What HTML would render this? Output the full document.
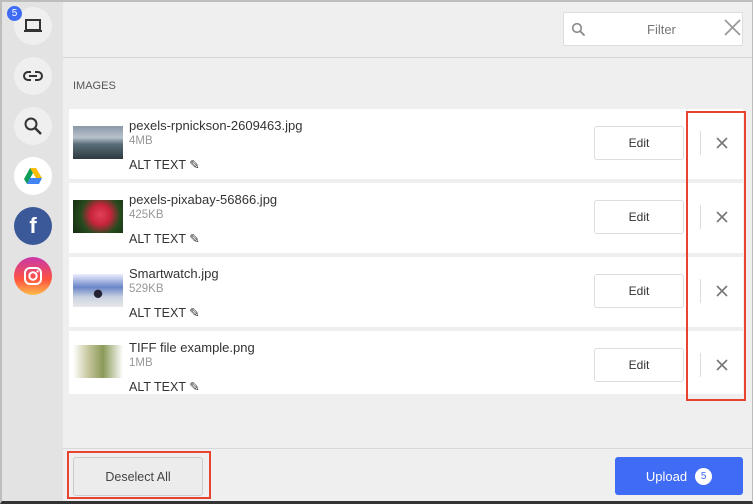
<!DOCTYPE html><html><head><style>
*{box-sizing:border-box;margin:0;padding:0}
body{width:753px;height:504px;overflow:hidden;font-family:"Liberation Sans",sans-serif;background:#efefef;position:relative}
.frame{position:absolute;left:0;top:0;width:753px;height:504px;border-top:2px solid #bdbdbd;border-left:2px solid #bdbdbd;border-bottom:3px solid #333;border-right:1px solid #bdbdbd}
.side{position:absolute;left:2px;top:2px;width:61px;height:499px;background:#e3e3e3}
.ic{position:absolute;left:14px;width:38px;height:38px;border-radius:50%;background:#efefef;display:flex;align-items:center;justify-content:center}
.hline{position:absolute;left:63px;right:1px;height:1px;background:#d8d8d8}
.row{position:absolute;left:69px;width:674px;height:70px;background:#fff}
.th{position:absolute;left:4px;top:17px;width:50px;height:33px}
.nm{position:absolute;left:60px;top:9px;font-size:13px;color:#333}
.sz{position:absolute;left:60px;top:26px;font-size:11.5px;color:#999}
.alt{position:absolute;left:60px;top:48px;font-size:12.5px;color:#333}
.edit{position:absolute;left:525px;top:17px;width:90px;height:34px;border:1px solid #ddd;border-radius:3px;font-size:12px;color:#333;display:flex;align-items:center;justify-content:center}
.dv{position:absolute;left:631px;top:22px;width:1px;height:24px;background:#ddd}
.x{position:absolute;left:646px;top:27px}
.red{position:absolute;border:2px solid #e8432f}
</style></head><body>
<div class="side"></div>
<div class="ic" style="top:7px"><svg width="20" height="18" viewBox="0 0 20 18"><rect x="3" y="3" width="14" height="10" fill="none" stroke="#333" stroke-width="2"/><rect x="1" y="13" width="18" height="2" fill="#333"/></svg></div>
<div style="position:absolute;left:7px;top:6px;width:15px;height:15px;border-radius:50%;background:#3f6bf5;color:#fff;font-size:10px;text-align:center;line-height:15px">5</div>
<div class="ic" style="top:57px"><svg width="20" height="12" viewBox="0 0 20 12"><path d="M8 2H5a4 4 0 0 0 0 8h3M12 2h3a4 4 0 0 1 0 8h-3M6 6h8" fill="none" stroke="#333" stroke-width="2"/></svg></div>
<div class="ic" style="top:107px"><svg width="20" height="20" viewBox="0 0 20 20"><circle cx="8" cy="8" r="5.5" fill="none" stroke="#333" stroke-width="2"/><path d="M12 12l6 6" stroke="#333" stroke-width="2.4"/></svg></div>
<div class="ic" style="top:157px;background:#fff"><svg width="20" height="18" viewBox="0 0 20 18"><path d="M7 1h6l6 10h-6z" fill="#fbbc04"/><path d="M7 1l3 5-6 11-3-5z" fill="#0f9d58"/><path d="M4 17l3-6h12l-3 6z" fill="#4285f4"/></svg></div>
<div class="ic" style="top:207px;background:#3b5998;color:#fff;font-weight:bold;font-size:22px">f</div>
<div class="ic" style="top:257px;background:linear-gradient(#c837ab,#ff543e 60%,#fdbc4b)"><svg width="20" height="20" viewBox="0 0 20 20"><rect x="2" y="2" width="16" height="16" rx="5" fill="none" stroke="#fff" stroke-width="2"/><circle cx="10" cy="10" r="3.7" fill="none" stroke="#fff" stroke-width="2"/><circle cx="14.6" cy="5.4" r="1.1" fill="#fff"/></svg></div>
<div class="hline" style="top:57px"></div>
<div style="position:absolute;left:563px;top:12px;width:180px;height:34px;background:#fff;border:1px solid #ddd;border-radius:2px">
<svg style="position:absolute;left:7px;top:9px" width="15" height="15" viewBox="0 0 15 15"><circle cx="6" cy="6" r="4.3" fill="none" stroke="#888" stroke-width="1.6"/><path d="M9 9l4.5 4.5" stroke="#888" stroke-width="1.8"/></svg>
<span style="position:absolute;left:83px;top:9px;font-size:13px;color:#777">Filter</span>
<svg style="position:absolute;left:160px;top:6px" width="17" height="17" viewBox="0 0 17 17"><path d="M1 1l15 15M16 1L1 16" stroke="#999" stroke-width="1.8"/></svg></div>
<div style="position:absolute;left:73px;top:80px;font-size:11px;color:#555">IMAGES</div>

<div class="row" style="top:109px"><div class="th" style="background:linear-gradient(#8a98a8 0,#b8c2cc 35%,#5a6e7a 55%,#2d3a40 100%)"></div><div class="nm">pexels-rpnickson-2609463.jpg</div><div class="sz">4MB</div><div class="alt">ALT TEXT ✎</div><div class="edit">Edit</div><div class="dv"></div><svg class="x" width="14" height="14"><path d="M2 2l10 10M12 2L2 12" stroke="#777" stroke-width="1.6"/></svg></div>
<div class="row" style="top:183px"><div class="th" style="background:radial-gradient(circle at 55% 45%,#e0405a 0,#c8243c 30%,#264a1e 60%,#142a10)"></div><div class="nm">pexels-pixabay-56866.jpg</div><div class="sz">425KB</div><div class="alt">ALT TEXT ✎</div><div class="edit">Edit</div><div class="dv"></div><svg class="x" width="14" height="14"><path d="M2 2l10 10M12 2L2 12" stroke="#777" stroke-width="1.6"/></svg></div>
<div class="row" style="top:257px"><div class="th" style="background:radial-gradient(circle at 50% 60%,#223 0,#223 12%,transparent 14%),linear-gradient(#eef 0,#6a86c8 40%,#c8d2e0 70%,#e8e8e8)"></div><div class="nm">Smartwatch.jpg</div><div class="sz">529KB</div><div class="alt">ALT TEXT ✎</div><div class="edit">Edit</div><div class="dv"></div><svg class="x" width="14" height="14"><path d="M2 2l10 10M12 2L2 12" stroke="#777" stroke-width="1.6"/></svg></div>
<div class="row" style="top:331px;height:63px"><div class="th" style="top:14px;background:linear-gradient(90deg,#fff 0,#c8c8a0 30%,#8a9a58 60%,#fff)"></div><div class="nm">TIFF file example.png</div><div class="sz">1MB</div><div class="alt">ALT TEXT ✎</div><div class="edit">Edit</div><div class="dv"></div><svg class="x" width="14" height="14"><path d="M2 2l10 10M12 2L2 12" stroke="#777" stroke-width="1.6"/></svg></div>

<div class="red" style="left:686px;top:111px;width:60px;height:290px"></div>
<div class="hline" style="top:448px"></div>
<div style="position:absolute;left:73px;top:457px;width:130px;height:39px;border:1px solid #ccc;border-radius:3px;background:#ececec;font-size:12.5px;color:#444;display:flex;align-items:center;justify-content:center">Deselect All</div>
<div class="red" style="left:67px;top:451px;width:144px;height:48px"></div>
<div style="position:absolute;left:615px;top:457px;width:128px;height:38px;border-radius:3px;background:#3f6bf5;color:#fff;font-size:13px;display:flex;align-items:center;justify-content:center">Upload <span style="display:inline-block;width:17px;height:17px;border-radius:50%;background:#fff;color:#3f6bf5;font-size:10px;line-height:17px;text-align:center;margin-left:8px">5</span></div>
<div class="frame"></div>
</body></html>
